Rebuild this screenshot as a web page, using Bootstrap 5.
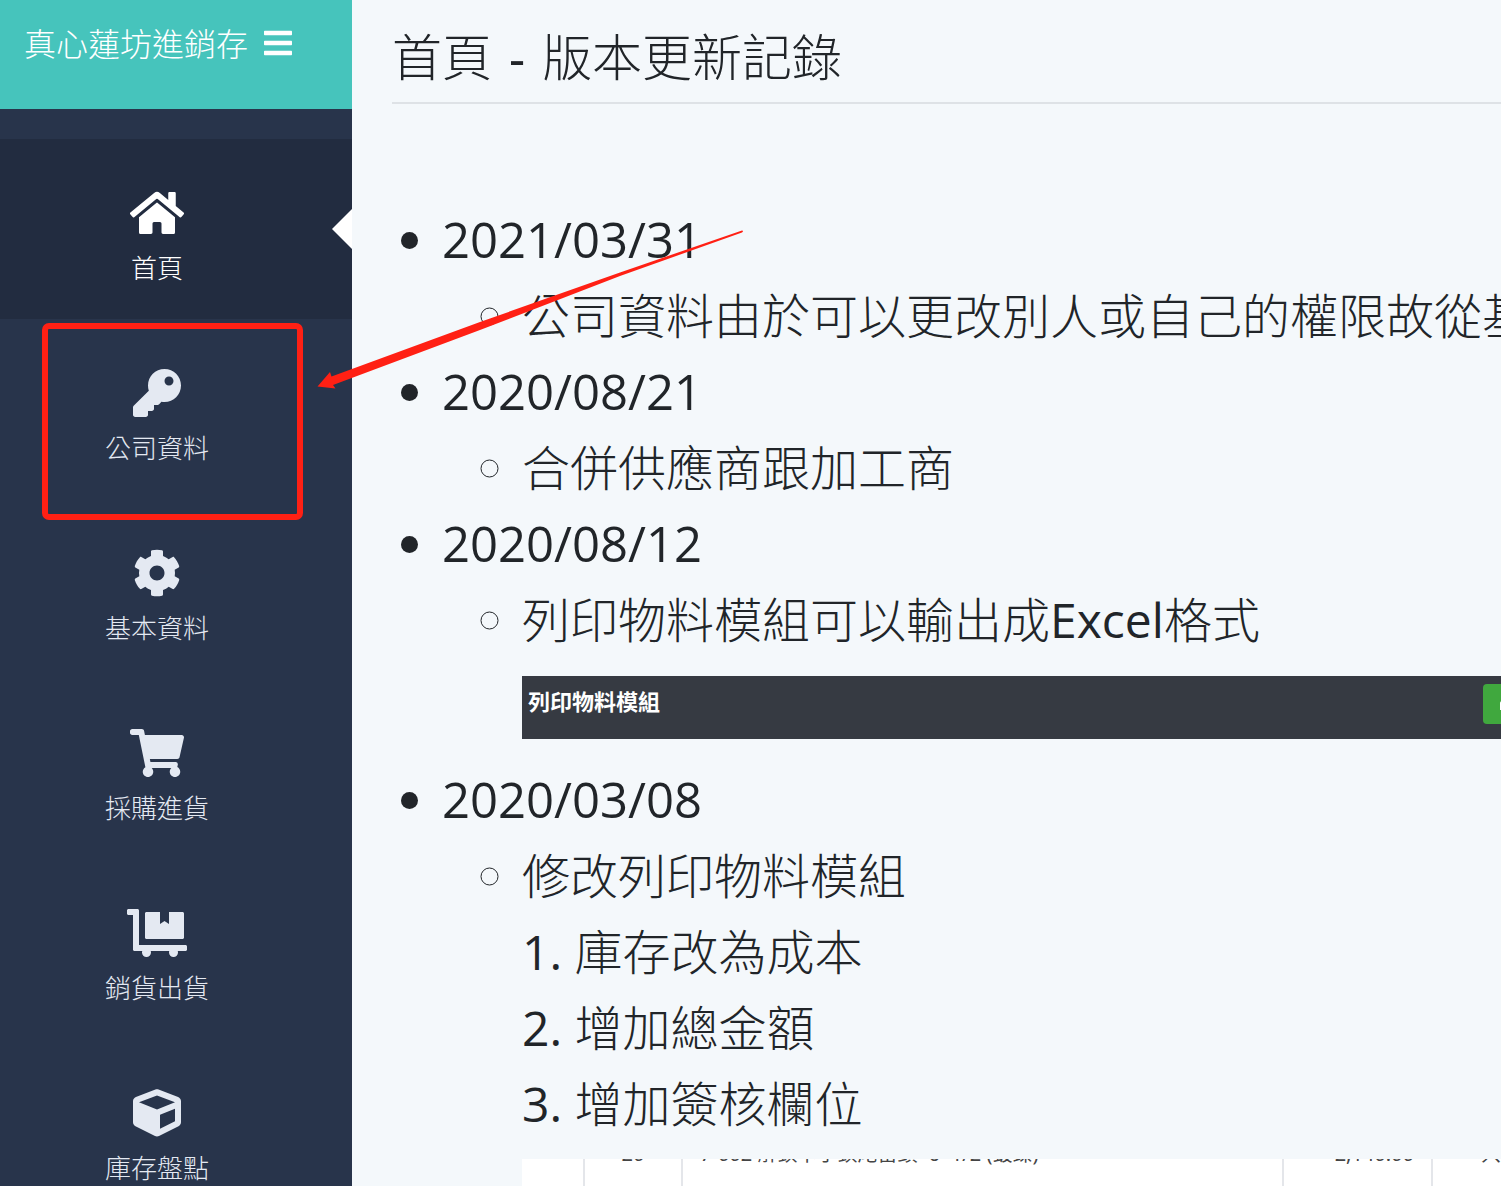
<!DOCTYPE html>
<html lang="zh-Hant">
<head>
<meta charset="utf-8">
<meta name="viewport" content="width=device-width, initial-scale=1">
<title>真心蓮坊進銷存</title>
<link href="https://cdn.jsdelivr.net/npm/bootstrap@5.3.0/dist/css/bootstrap.min.css" rel="stylesheet">
<style>
body { background: #f4f8fb; color: #212529; font-family: "Noto Sans", "Noto Sans CJK TC", sans-serif; font-weight: 300; }
.app-shell { height: 100vh; }
.side-panel { width: 352px; background: #28344b; }
.brand-bar { height: 109px; padding: 20px 24px; background: #46c4bc; font-size: 32px; line-height: 48px; }
.brand-bar svg { width: 28px; height: 32px; }
.side-menu { padding-top: 30px; }
.side-link { height: 180px; padding: 50px 38px 0 0; color: #e4e9f2; font-size: 26px; line-height: 40px; }
.side-link svg { height: 48px; margin-bottom: 11px; }
.side-link.active { background: #222c40; color: #fff; }
.side-link.active::after { content: ""; position: absolute; right: 0; top: 70px; border: solid transparent; border-width: 20px 20px 20px 0; border-right-color: #fff; }
.side-link.framed::before { content: ""; position: absolute; left: 42px; top: 4px; width: 261px; height: 197px; border: 6px solid #ff2014; border-radius: 7px; z-index: 1; }
.main-area { padding: 20px 0 0 40px; }
.page-title { font-size: 50px; line-height: 74px; padding-bottom: 8px; border-bottom: 2px solid #dee2e6; font-weight: 300; }
.title-dash { font-weight: 400; }
.log-list { margin-top: 98px; padding-left: 50px; font-size: 48px; line-height: 76px; }
.log-list ul { padding-left: 80px; font-size: 48px; }
.log-date, .latin { font-family: "Open Sans", "Noto Sans", sans-serif; font-weight: 400; line-height: 1; }
.log-date { font-size: 49px; }
.latin { font-size: 48px; }
.module-bar { height: 63px; margin: 18px 0 23px; padding: 0 0 0 6px; background: #363a42; color: #fff; font-size: 22px; line-height: 50px; font-weight: 700; }
.print-btn { width: 56px; height: 40px; margin: 8px -38px 0 0; background: #40a83e; border-radius: 4px; color: #fff; }
.sheet-clip { margin-top: 17px; background: #fff; overflow: hidden; height: 60px; }
.sheet-grid { width: 1120px; margin-top: -19px; table-layout: fixed; font-size: 20px; line-height: 28px; color: #444; font-weight: 400; }
.sheet-grid td { border-right: 2px solid #e4e6ea; padding: 0 17px; height: 100px; vertical-align: top; white-space: nowrap; }
.pointer-arrow { left: 310px; top: 220px; z-index: 3; pointer-events: none; }
</style>
<script src="https://cdn.jsdelivr.net/npm/bootstrap@5.3.0/dist/js/bootstrap.bundle.min.js"></script>
</head>
<body>
<div class="app-shell d-flex overflow-hidden position-relative">
  <aside class="side-panel flex-shrink-0 overflow-hidden">
    <div class="brand-bar d-flex align-items-start text-white">
      <span class="text-nowrap">真心蓮坊進銷存</span>
      <button type="button" class="btn p-0 border-0 text-white ms-3 d-flex align-items-center h-100 pb-4" aria-label="選單"><svg viewBox="0 0 448 512" fill="currentColor"><path d="M16 132h416c9 0 16-7 16-16V76c0-9-7-16-16-16H16C7 60 0 67 0 76v40c0 9 7 16 16 16zm0 160h416c9 0 16-7 16-16v-40c0-9-7-16-16-16H16c-9 0-16 7-16 16v40c0 9 7 16 16 16zm0 160h416c9 0 16-7 16-16v-40c0-9-7-16-16-16H16c-9 0-16 7-16 16v40c0 9 7 16 16 16z"/></svg></button>
    </div>
    <nav class="side-menu d-flex flex-column">
      <a href="#" class="side-link active position-relative d-flex flex-column align-items-center text-decoration-none"><svg viewBox="0 0 576 512" fill="currentColor"><path d="M280.37 148.26L96 300.11V464a16 16 0 0 0 16 16l112.06-.29a16 16 0 0 0 15.92-16V368a16 16 0 0 1 16-16h64a16 16 0 0 1 16 16v95.64a16 16 0 0 0 16 16.05L464 480a16 16 0 0 0 16-16V300L295.67 148.26a12.19 12.19 0 0 0-15.3 0zM571.6 251.47L488 182.56V44.05a12 12 0 0 0-12-12h-56a12 12 0 0 0-12 12v72.61L318.47 43a48 48 0 0 0-61 0L4.34 251.47a12 12 0 0 0-1.6 16.9l25.5 31A12 12 0 0 0 45.15 301l235.22-193.74a12.19 12.19 0 0 1 15.3 0L530.9 301a12 12 0 0 0 16.9-1.6l25.5-31a12 12 0 0 0-1.7-16.93z"/></svg><span>首頁</span></a>
      <a href="#" class="side-link framed position-relative d-flex flex-column align-items-center text-decoration-none"><svg viewBox="0 0 512 512" fill="currentColor"><path d="M512 176.001C512 273.203 433.202 352 336 352c-11.22 0-22.19-1.062-32.827-3.069l-24.012 27.014A23.999 23.999 0 0 1 261.223 384H224v40c0 13.255-10.745 24-24 24h-40v40c0 13.255-10.745 24-24 24H24c-13.255 0-24-10.745-24-24v-78.059c0-6.365 2.529-12.47 7.029-16.971l161.802-161.802C163.108 213.814 160 195.271 160 176 160 78.798 238.797.001 335.999 0 433.488-.001 512 78.511 512 176.001zM336 128c0 26.51 21.49 48 48 48s48-21.49 48-48-21.49-48-48-48-48 21.49-48 48z"/></svg><span>公司資料</span></a>
      <a href="#" class="side-link d-flex flex-column align-items-center text-decoration-none"><svg viewBox="0 0 512 512" fill="currentColor"><path d="M487.4 315.7l-42.6-24.6c4.3-23.2 4.3-47 0-70.2l42.6-24.6c4.9-2.8 7.1-8.6 5.5-14-11.1-35.6-30-67.8-54.7-94.6-3.8-4.1-10-5.1-14.8-2.3L380.8 110c-17.9-15.4-38.5-27.3-60.8-35.1V25.8c0-5.6-3.9-10.5-9.4-11.7-36.7-8.2-74.3-7.8-109.2 0-5.5 1.2-9.4 6.1-9.4 11.7V75c-22.2 7.9-42.8 19.8-60.8 35.1L88.7 85.5c-4.9-2.8-11-1.9-14.8 2.3-24.7 26.7-43.6 58.9-54.7 94.6-1.7 5.4.6 11.2 5.5 14L67.3 221c-4.3 23.2-4.3 47 0 70.2l-42.6 24.6c-4.9 2.8-7.1 8.6-5.5 14 11.1 35.6 30 67.8 54.7 94.6 3.8 4.1 10 5.1 14.8 2.3l42.6-24.6c17.9 15.4 38.5 27.3 60.8 35.1v49.2c0 5.6 3.9 10.5 9.4 11.7 36.7 8.2 74.3 7.8 109.2 0 5.5-1.2 9.4-6.1 9.4-11.7v-49.2c22.2-7.9 42.8-19.8 60.8-35.1l42.6 24.6c4.9 2.8 11 1.9 14.8-2.3 24.7-26.7 43.6-58.9 54.7-94.6 1.5-5.5-.7-11.3-5.6-14.1zM256 336c-44.1 0-80-35.9-80-80s35.9-80 80-80 80 35.9 80 80-35.9 80-80 80z"/></svg><span>基本資料</span></a>
      <a href="#" class="side-link d-flex flex-column align-items-center text-decoration-none"><svg viewBox="0 0 576 512" fill="currentColor"><path d="M528.12 301.319l47.273-208C578.806 78.301 567.391 64 551.99 64H159.208l-9.166-44.81C147.758 8.021 137.93 0 126.529 0H24C10.745 0 0 10.745 0 24v16c0 13.255 10.745 24 24 24h69.883l70.248 343.435C147.325 417.1 136 435.222 136 456c0 30.928 25.072 56 56 56s56-25.072 56-56c0-15.674-6.447-29.835-16.824-40h209.647C430.447 426.165 424 440.326 424 456c0 30.928 25.072 56 56 56s56-25.072 56-56c0-22.172-12.888-41.332-31.579-50.405l5.517-24.276c3.413-15.018-8.002-29.319-23.403-29.319H218.117l-6.545-32h293.145c11.206 0 20.92-7.754 23.403-18.681z"/></svg><span>採購進貨</span></a>
      <a href="#" class="side-link d-flex flex-column align-items-center text-decoration-none"><svg viewBox="0 0 640 512" fill="currentColor"><path d="M208 320h384c8.8 0 16-7.2 16-16V48c0-8.8-7.2-16-16-16H448v128l-48-32-48 32V32H208c-8.8 0-16 7.2-16 16v256c0 8.8 7.2 16 16 16zm416 64H128V16c0-8.8-7.2-16-16-16H16C7.2 0 0 7.2 0 16v32c0 8.8 7.2 16 16 16h48v368c0 8.8 7.2 16 16 16h82.9c-1.8 5-2.9 10.4-2.9 16 0 26.5 21.5 48 48 48s48-21.5 48-48c0-5.6-1.2-11-2.9-16H451c-1.8 5-2.9 10.4-2.9 16 0 26.5 21.5 48 48 48s48-21.5 48-48c0-5.6-1.2-11-2.9-16H624c8.8 0 16-7.2 16-16v-32c0-8.8-7.2-16-16-16z"/></svg><span>銷貨出貨</span></a>
      <a href="#" class="side-link d-flex flex-column align-items-center text-decoration-none"><svg viewBox="0 0 512 512" fill="currentColor"><path d="M239.1 6.3l-208 78c-18.7 7-31.1 25-31.1 45v225.1c0 18.2 10.3 34.8 26.5 42.9l208 104c13.5 6.8 29.4 6.8 42.9 0l208-104c16.3-8.1 26.5-24.8 26.5-42.9V129.3c0-20-12.4-37.9-31.1-44.9l-208-78C262 2.2 250 2.2 239.1 6.3zM256 68.4l192 72v1.1l-192 78-192-78v-1.1l192-72zm32 356V275.5l160-65v133.9l-160 80z"/></svg><span>庫存盤點</span></a>
    </nav>
  </aside>

  <main class="main-area flex-grow-1 overflow-hidden text-nowrap">
    <h1 class="page-title mb-0">首頁 <span class="title-dash mx-1">-</span> 版本更新記錄</h1>
    <ul class="log-list mb-0">
      <li><span class="log-date">2021/03/31</span>
        <ul><li>公司資料由於可以更改別人或自己的權限故從基</li></ul>
      </li>
      <li><span class="log-date">2020/08/21</span>
        <ul><li>合併供應商跟加工商</li></ul>
      </li>
      <li><span class="log-date">2020/08/12</span>
        <ul><li>列印物料模組可以輸出成<span class="latin">Excel</span>格式
          <div class="module-bar d-flex justify-content-between">
            <span>列印物料模組</span>
            <button type="button" class="print-btn btn p-0 d-flex align-items-center ps-3" aria-label="列印"><svg width="22" height="22" viewBox="0 0 22 22" fill="currentColor"><path d="M5 1h12v6H5zM2 8h18a2 2 0 0 1 2 2v7h-4v4H4v-4H0v-7a2 2 0 0 1 2-2z"/></svg></button>
          </div>
        </li></ul>
      </li>
      <li><span class="log-date">2020/03/08</span>
        <ul><li>修改列印物料模組
          <div><span class="latin">1. </span>庫存改為成本</div>
          <div><span class="latin">2. </span>增加總金額</div>
          <div><span class="latin">3. </span>增加簽核欄位</div>
          <div class="sheet-clip">
            <table class="sheet-grid">
              <colgroup><col style="width:62px"><col style="width:98px"><col style="width:601px"><col style="width:149px"><col></colgroup>
              <tbody><tr><td></td><td class="text-center">20</td><td>7-002 解鎖卡手鎖尾苗頭*6*1/2 (鍍鎳)</td><td class="text-end">2,140.00</td><td class="ps-5">只</td></tr></tbody>
            </table>
          </div>
        </li></ul>
      </li>
    </ul>
  </main>

  <svg class="pointer-arrow position-absolute" width="440" height="180" viewBox="310 220 440 180" aria-hidden="true"><path fill="#ff2014" d="M317.500 386.500L330 372L331.500 376.500L480 322L620 272.500L742 230.500Q744 231 742 232.500L620 276L480 330L333 385L335.500 388.500Z"/></svg>
</div>
</body>
</html>
